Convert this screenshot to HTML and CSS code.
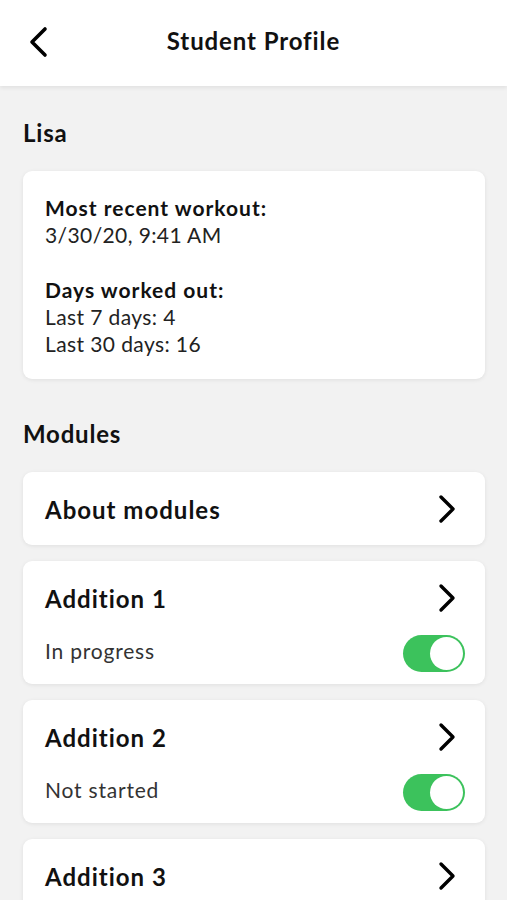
FILE: index.html
```html
<!DOCTYPE html>
<html lang="en">
<head>
    <meta charset="UTF-8">
    <meta name="viewport" content="width=device-width, initial-scale=1.0">
    <title>Student Profile</title>
    <link rel="stylesheet" href="styles.css">
</head>
<body>
    <header class="topbar">
        <button class="back-btn" title="Back">
            <svg width="22" height="32" viewBox="0 0 22 32"><path d="M18 3 L5 16 L18 29" fill="none" stroke="#000" stroke-width="3.6" stroke-linecap="round" stroke-linejoin="round"/></svg>
        </button>
        <h1 class="topbar-title">Student Profile</h1>
        <div></div>
    </header>
    <main class="content">
        <h2 class="section-title first">Lisa</h2>
        <div class="card stats-card">
            <div class="stat-label">Most recent workout:</div>
            <div class="stat-value">3/30/20, 9:41 AM</div>
            <div class="stat-label spaced">Days worked out:</div>
            <div class="stat-value">Last 7 days: 4</div>
            <div class="stat-value">Last 30 days: 16</div>
        </div>

        <h2 class="section-title">Modules</h2>
        <ul class="module-list">
            <li class="card module-card simple">
                <div class="module-head">
                    <span class="module-name">About modules</span>
                    <svg class="chevron" width="20" height="30" viewBox="0 0 20 30"><path d="M4 3 L16 15 L4 27" fill="none" stroke="#000" stroke-width="3.4" stroke-linecap="round" stroke-linejoin="round"/></svg>
                </div>
            </li>
            <li class="card module-card">
                <div class="module-head">
                    <span class="module-name">Addition 1</span>
                    <svg class="chevron" width="20" height="30" viewBox="0 0 20 30"><path d="M4 3 L16 15 L4 27" fill="none" stroke="#000" stroke-width="3.4" stroke-linecap="round" stroke-linejoin="round"/></svg>
                </div>
                <div class="module-status">
                    <span>In progress</span>
                    <label class="toggle"><input type="checkbox" checked><span class="toggle-track"></span></label>
                </div>
            </li>
            <li class="card module-card">
                <div class="module-head">
                    <span class="module-name">Addition 2</span>
                    <svg class="chevron" width="20" height="30" viewBox="0 0 20 30"><path d="M4 3 L16 15 L4 27" fill="none" stroke="#000" stroke-width="3.4" stroke-linecap="round" stroke-linejoin="round"/></svg>
                </div>
                <div class="module-status">
                    <span>Not started</span>
                    <label class="toggle"><input type="checkbox" checked><span class="toggle-track"></span></label>
                </div>
            </li>
            <li class="card module-card">
                <div class="module-head">
                    <span class="module-name">Addition 3</span>
                    <svg class="chevron" width="20" height="30" viewBox="0 0 20 30"><path d="M4 3 L16 15 L4 27" fill="none" stroke="#000" stroke-width="3.4" stroke-linecap="round" stroke-linejoin="round"/></svg>
                </div>
                <div class="module-status">
                    <span>Not started</span>
                    <label class="toggle"><input type="checkbox" checked><span class="toggle-track"></span></label>
                </div>
            </li>
        </ul>
    </main>
</body>
</html>
```
FILE: styles.css
```css
body {
    margin: 0;
    padding: 0;
    background: #f2f2f2;
    font-family: Lato, "Open Sans", Arial, sans-serif;
    color: #111;
}
.topbar {
    height: 86px;
    background: #fff;
    display: grid;
    grid-template-columns: 1fr auto 1fr;
    align-items: center;
    box-shadow: 0 2px 4px rgba(0, 0, 0, 0.07);
    position: relative;
    z-index: 2;
}
.back-btn {
    background: none;
    border: none;
    padding: 0;
    margin-left: 27px;
    width: 22px;
    height: 32px;
    cursor: pointer;
    margin-top: -2px;
}
.topbar-title {
    margin: 0;
    font-size: 24px;
    font-weight: 700;
    letter-spacing: 0.9px;
    color: #111;
    margin-top: -5px;
}
.content {
    padding: 0 22px 0 23px;
}
.section-title {
    margin: 41px 0 24px 0;
    font-size: 24px;
    line-height: 28px;
    font-weight: 700;
    letter-spacing: 0.8px;
    color: #111;
}
.section-title.first {
    margin-top: 33px;
}
.card {
    background: #fff;
    border-radius: 9px;
    box-shadow: 0 1px 4px rgba(0, 0, 0, 0.08);
}
.stats-card {
    padding: 23px 22px 22px 22px;
}
.stat-label {
    font-size: 21px;
    line-height: 27px;
    font-weight: 700;
    letter-spacing: 1px;
    color: #111;
}
.stat-label.spaced {
    margin-top: 28px;
}
.stat-value {
    font-size: 21px;
    line-height: 27px;
    letter-spacing: 0.4px;
    color: #222;
}
.module-list {
    list-style: none;
    margin: 0;
    padding: 0;
    display: flex;
    flex-direction: column;
    gap: 16px;
}
.module-card {
    padding: 23px 20px 12px 22px;
}
.module-card.simple {
    padding: 23px 20px 22px 22px;
}
.module-head {
    display: flex;
    justify-content: space-between;
    align-items: center;
    height: 28px;
    padding-right: 8px;
}
.module-name {
    font-size: 24px;
    font-weight: 700;
    letter-spacing: 1px;
    color: #111;
}
.module-status {
    display: flex;
    justify-content: space-between;
    align-items: center;
    margin-top: 23px;
    font-size: 21px;
    letter-spacing: 0.8px;
    color: #333;
}
.module-status span {
    margin-bottom: 6px;
}
.toggle {
    display: block;
    width: 62px;
    height: 37px;
    cursor: pointer;
}
.toggle input {
    display: none;
}
.toggle-track {
    display: block;
    width: 100%;
    height: 100%;
    border-radius: 19px;
    background: #3cc25c;
    position: relative;
}
.toggle-track::after {
    content: "";
    position: absolute;
    top: 2px;
    right: 2px;
    width: 33px;
    height: 33px;
    border-radius: 50%;
    background: #fff;
}
```
